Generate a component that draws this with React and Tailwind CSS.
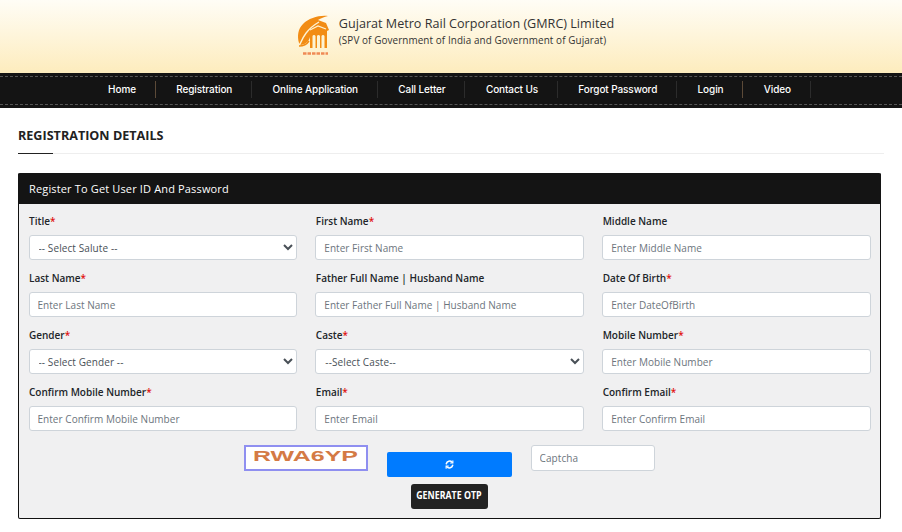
import React from "react";

const nav = ["Home", "Registration", "Online Application", "Call Letter", "Contact Us", "Forgot Password", "Login", "Video"];
const strongSeps = ["Home", "Login"];

const fields = [
  { label: "Title", req: true, select: "-- Select Salute --" },
  { label: "First Name", req: true, ph: "Enter First Name" },
  { label: "Middle Name", ph: "Enter Middle Name" },
  { label: "Last Name", req: true, ph: "Enter Last Name" },
  { label: "Father Full Name | Husband Name", ph: "Enter Father Full Name | Husband Name" },
  { label: "Date Of Birth", req: true, ph: "Enter DateOfBirth" },
  { label: "Gender", req: true, select: "-- Select Gender --" },
  { label: "Caste", req: true, select: "--Select Caste--" },
  { label: "Mobile Number", req: true, ph: "Enter Mobile Number" },
  { label: "Confirm Mobile Number", req: true, ph: "Enter Confirm Mobile Number" },
  { label: "Email", req: true, ph: "Enter Email" },
  { label: "Confirm Email", req: true, ph: "Enter Confirm Email" },
];

function Logo() {
  return (
    <svg width="33" height="42" viewBox="0 0 33 42" className="shrink-0">
      <path d="M31 1 C22 0 12 3 6 9 C1 14 0 21 2 28 L4 30 C9 29 12 26 13 22 L13 33 H30 V16 L32 15 L29 8 L21 5 C24 3 27 2 31 1 Z" fill="#f28c14" />
      <path d="M3 29 C6 22 10 14 22 7" fill="none" stroke="#fdf3d4" strokeWidth="1.4" />
      <path d="M13 15 L21 11 L29 14" fill="none" stroke="#fdf3d4" strokeWidth="1.2" />
      <path d="M2 31 C6 31 10 29 12 26" fill="none" stroke="#f28c14" strokeWidth="1.5" />
      <path d="M15.5 33 V21 a1.6 1.6 0 0 1 3 0 V33 Z M20 33 V21 a1.6 1.6 0 0 1 3 0 V33 Z M24.5 33 V21 a1.6 1.6 0 0 1 3 0 V33 Z" fill="#fdf3d4" />
      <path d="M6 38.5 H31" stroke="#ef8a55" strokeWidth="2.4" strokeDasharray="3.5 1" />
    </svg>
  );
}

const inputCls =
  "w-full h-[25px] rounded-[3px] border border-[#ced4da] bg-white px-2 text-[10px] tracking-[0.04px] text-[#495057] placeholder:text-[#6c757d] outline-none";

function Field({ f }) {
  return (
    <div className="flex flex-col">
      <label className="h-[24px] pt-[3px] pl-[0.5px] text-[10px] leading-[15px] font-semibold text-[#212529]">
        {f.label}
        {f.req && <span className="text-[#e01010]">*</span>}
      </label>
      {f.select ? (
        <select className="w-full h-[25px] rounded-[3px] border border-[#ced4da] bg-white pl-[5px] text-[10px] tracking-[0.1px] text-[#495057] outline-none">
          <option>{f.select}</option>
        </select>
      ) : (
        <input className={inputCls} placeholder={f.ph} />
      )}
    </div>
  );
}

export default function App() {
  return (
    <div className="w-[902px] h-[532px] overflow-hidden bg-white font-['Open_Sans',sans-serif]">
      <header className="h-[73px] flex items-center justify-center gap-[9px] bg-gradient-to-b from-[#fffdf6] to-[#fdecbd] pl-[9px] pb-[12px]">
        <div className="mt-[10px]"><Logo /></div>
        <div className="flex flex-col">
          <div className="text-[12.6px] leading-[17px] text-[#333]">Gujarat Metro Rail Corporation (GMRC) Limited</div>
          <div className="mt-[1px] text-[9.9px] leading-[14px] tracking-[0.1px] text-[#333]">(SPV of Government of India and Government of Gujarat)</div>
        </div>
      </header>

      <nav className="h-[35px] bg-[#141414] py-[3px]">
        <div className="h-full flex items-center justify-center border-y border-dashed border-[#555] pb-[2px] pr-[4px]">
          {nav.map((n) => (
            <div
              key={n}
              className={
                "h-[17px] flex items-center pl-[20.7px] pr-[18.6px] text-[10px] font-medium tracking-[-0.1px] whitespace-nowrap text-white font-['Inter',sans-serif] border-r " +
                (strongSeps.includes(n) ? "border-[#5c4a38]" : "border-[#2c2c2c]")
              }
            >
              {n}
            </div>
          ))}
        </div>
      </nav>

      <section className="px-[18px] pt-[17px]">
        <h2 className="h-[28px] pt-[1px] text-[12.6px] leading-[20px] font-bold text-[#222]">REGISTRATION DETAILS</h2>
        <div className="h-px bg-[#eeeeee]">
          <div className="h-px w-[35px] bg-[#222]" />
        </div>

        <div className="mt-[19px] w-[863px] h-[346px] border border-[#111] border-t-0 rounded-[2px] bg-[#f0f0f1]">
          <div className="h-[31px] -mx-px flex items-center rounded-t-[2px] bg-[#141414] px-[11px] pt-[1px] text-[11px] font-medium tracking-[0.15px] text-white">
            Register To Get User ID And Password
          </div>
          <div className="px-[9.5px] pt-[7px] grid grid-cols-3 gap-x-[18.5px] gap-y-[8px]">
            {fields.map((f) => (
              <Field key={f.label} f={f} />
            ))}
          </div>
          <div className="mt-[14px] flex justify-center items-start gap-[19px] pr-[1px]">
            <div className="w-[124px] h-[26px] border-2 border-[#8f8ff0] bg-white flex justify-center overflow-hidden">
              <span className="inline-block text-[14.5px] leading-[18px] font-bold text-[#d47a45] font-['Liberation_Sans',sans-serif] scale-x-[1.72]">RWA6YP</span>
            </div>
            <div className="flex flex-col items-center mt-[7px]">
              <button className="w-[125px] h-[25px] rounded-[2px] bg-[#007bff] flex items-center justify-center">
                <svg width="9" height="9" viewBox="0 0 24 24" fill="none" stroke="#fff" strokeWidth="4" strokeLinecap="round">
                  <path d="M3.5 10 A9 9 0 0 1 19 6" />
                  <path d="M20.5 14 A9 9 0 0 1 5 18" />
                  <path d="M21 2 V8 H15" strokeWidth="3" />
                  <path d="M3 22 V16 H9" strokeWidth="3" />
                </svg>
              </button>
              <button className="mt-[7px] w-[77px] h-[25px] pb-[2px] rounded-[3px] bg-[#222] flex items-center justify-center text-white">
                <span className="inline-block text-[10.5px] font-bold whitespace-nowrap scale-x-[0.84]">GENERATE OTP</span>
              </button>
            </div>
            <input className="w-[124px] h-[26px] rounded-[3px] border border-[#ced4da] bg-white px-2 text-[10px] tracking-[0.1px] placeholder:text-[#6c757d] outline-none" placeholder="Captcha" />
          </div>
        </div>
      </section>
    </div>
  );
}
